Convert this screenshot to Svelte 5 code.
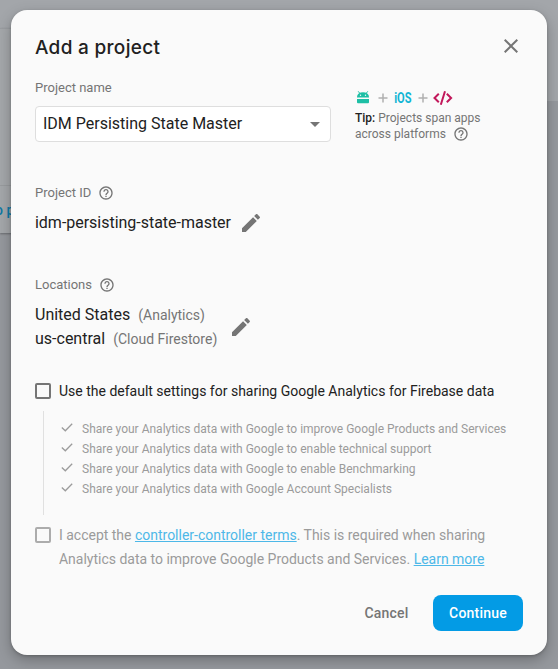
<script>
  const benefits = [
    'Share your Analytics data with Google to improve Google Products and Services',
    'Share your Analytics data with Google to enable technical support',
    'Share your Analytics data with Google to enable Benchmarking',
    'Share your Analytics data with Google Account Specialists'
  ];
</script>

{#snippet help()}
  <svg class="help" width="16" height="16" viewBox="0 0 24 24" fill="#757575">
    <path d="M11 18h2v-2h-2v2zm1-16C6.48 2 2 6.48 2 12s4.480 10 10 10 10-4.480 10-10S17.520 2 12 2zm0 18c-4.410 0-8-3.590-8-8s3.590-8 8-8 8 3.590 8 8-3.590 8-8 8zm0-14c-2.210 0-4 1.790-4 4h2c0-1.100.9-2 2-2s2 .9 2 2c0 2-3 1.750-3 5h2c0-2.250 3-2.500 3-5 0-2.210-1.790-4-4-4z" />
  </svg>
{/snippet}

{#snippet pencil()}
  <svg width="24" height="24" viewBox="0 0 24 24" fill="#757575">
    <path d="M3 17.250V21h3.750L17.810 9.940l-3.750-3.750L3 17.250zM20.710 7.040c.39-.39.39-1.020 0-1.410l-2.340-2.340c-.39-.39-1.020-.39-1.410 0l-1.830 1.830 3.750 3.750 1.830-1.830z" />
  </svg>
{/snippet}

<div class="page">
  <div class="behind">
    <div class="back-top"></div>
    <div class="back-card"><span>o p</span></div>
  </div>

  <div class="dialog">
    <header>
      <h1>Add a project</h1>
      <svg width="24" height="24" viewBox="0 0 24 24" fill="#757575">
        <path d="M19 6.410L17.590 5 12 10.590 6.410 5 5 6.410 10.590 12 5 17.590 6.410 19 12 13.410 17.590 19 19 17.590 13.410 12z" />
      </svg>
    </header>

    <section class="name-row">
      <div class="field">
        <div class="label">Project name</div>
        <div class="select">
          <span>IDM Persisting State Master</span>
          <i class="caret"></i>
        </div>
      </div>
      <aside>
        <div class="platforms">
          <svg width="100" height="16" viewBox="0 0 100 16">
            <g fill="#1dbfa5">
              <path d="M2 7.500V7a6 4.800 0 0 1 12 0v.5z" />
              <path d="M2 9h12v3.200a1 1 0 0 1-1 1H3a1 1 0 0 1-1-1z" />
              <path d="M3.200 1.300l2 2.500M12.800 1.300l-2 2.500" stroke="#1dbfa5" stroke-width="1" />
            </g>
            <circle cx="5.500" cy="5.300" r=".7" fill="#fafafa" />
            <circle cx="10.500" cy="5.300" r=".7" fill="#fafafa" />
            <path d="M28 3.500v9M23.500 8h9M68 3.500v9M63.500 8h9" stroke="#b0b0b0" stroke-width="1.500" />
            <text x="39.200" y="13" textLength="17.300" lengthAdjust="spacingAndGlyphs">iOS</text>
            <path d="M83.800 3.800L79.500 8l4.300 4.200M91.800 3.800L96.100 8l-4.300 4.200M90 1.200l-4.200 13.600" fill="none" stroke="#c2185b" stroke-width="2" />
          </svg>
        </div>
        <p class="tip"><b>Tip:</b> Projects span apps<br />across platforms {@render help()}</p>
      </aside>
    </section>

    <section class="id-block">
      <div class="label">Project ID {@render help()}</div>
      <div class="id-row"><span>idm-persisting-state-master</span>{@render pencil()}</div>
    </section>

    <section class="loc-block">
      <div class="label">Locations {@render help()}</div>
      <div class="loc-row">
        <div class="places">
          <div>United States<small>(Analytics)</small></div>
          <div>us-central<small>(Cloud Firestore)</small></div>
        </div>
        {@render pencil()}
      </div>
    </section>

    <div class="check-row">
      <i class="box"></i>
      <span>Use the default settings for sharing Google Analytics for Firebase data</span>
    </div>

    <ul>
      {#each benefits as benefit}
        <li>
          <svg width="12" height="12" viewBox="0 0 12 12"><path d="M.8 5.500l3.500 3.300L11.200 1.800" fill="none" stroke="#9b9b9b" stroke-width="1.300" /></svg>
          <span>{benefit}</span>
        </li>
      {/each}
    </ul>

    <div class="check-row terms">
      <i class="box"></i>
      <span>I accept the <a href="#terms">controller-controller terms</a>. This is required when sharing<br />Analytics data to improve Google Products and Services. <a href="#more">Learn more</a></span>
    </div>

    <footer>
      <button class="cancel">Cancel</button>
      <button class="continue">Continue</button>
    </footer>
  </div>
</div>

<style>
  .page {
    position: relative;
    box-sizing: border-box;
    width: 558px;
    height: 669px;
    padding: 10px 11px 14px;
    overflow: hidden;
    background: #95989d;
    font-family: Roboto, 'Liberation Sans', sans-serif;
    color: #212121;
  }
  .behind { position: absolute; inset: 0; }
  .back-top { height: 101px; background: #a3a6aa; }
  .back-card {
    position: absolute;
    left: 0;
    top: 28px;
    width: 40px;
    height: 205px;
    box-sizing: border-box;
    padding-top: 156px;
    background: linear-gradient(#989b9e, #989b9e) 0 156px / 100% 1px no-repeat, #a4a7aa;
    border-top: 1px solid #999ca0;
    box-shadow: 0 1px 2px rgba(0, 0, 0, .3);
  }
  .back-card span {
    display: block;
    margin: 16px 0 0 -5px;
    font-size: 14px;
    font-weight: 500;
    line-height: 18px;
    color: #0e79a5;
    white-space: nowrap;
  }
  .dialog {
    position: relative;
    box-sizing: border-box;
    height: 645px;
    padding: 24px;
    border-radius: 16px;
    background: #fafafa;
    box-shadow: 0 5px 14px rgba(0, 0, 0, .26), 0 1px 3px rgba(0, 0, 0, .2);
    white-space: nowrap;
  }
  header { display: flex; justify-content: space-between; height: 24px; }
  h1 {
    margin: 0;
    font: 500 19px/28px Inter, sans-serif;
    letter-spacing: .3px;
  }
  .label {
    display: flex;
    align-items: flex-start;
    gap: 7px;
    height: 20px;
    font-size: 13px;
    line-height: 19px;
    color: #757575;
  }
  .label .help { margin-top: 2px; }
  .name-row { display: flex; gap: 24px; height: 64px; margin-top: 20px; }
  .field { width: 296px; }
  .select {
    box-sizing: border-box;
    display: flex;
    align-items: center;
    justify-content: space-between;
    height: 36px;
    margin-top: 8px;
    padding: 0 10px 0 7px;
    border: 1px solid #dedede;
    border-radius: 4px;
    background: #fff;
    font-size: 16px;
  }
  .select span { padding-bottom: 2px; }
  .caret { border: 5px solid transparent; border-top-color: #757575; border-bottom: 0; }
  aside { padding-top: 12px; }
  .platforms { height: 16px; }
  .platforms svg { display: block; }
  text { font: 700 14px Roboto, sans-serif; fill: #12b5d4; }
  .tip { height: 32px; margin: 4px 0 0; font-size: 12px; line-height: 16px; color: #757575; }
  .tip b { font-weight: 500; color: #212121; }
  .tip .help { margin-left: 4px; vertical-align: -4px; }
  .id-block { margin-top: 41px; }
  .id-row { display: flex; align-items: center; gap: 8px; height: 24px; margin-top: 8px; font-size: 16px; }
  .id-row span { padding-bottom: 2px; letter-spacing: -.02px; }
  .loc-block { margin-top: 40px; }
  .loc-row { display: flex; align-items: center; gap: 12px; margin-top: 8px; }
  .places { font-size: 16px; line-height: 24px; }
  .places div { height: 24px; }
  small { margin-left: 8px; font-size: 14px; color: #757575; }
  .check-row { display: flex; gap: 8px; margin-top: 28px; font-size: 14px; line-height: 24px; }
  .box { box-sizing: border-box; flex: none; width: 16px; height: 16px; margin-top: 4px; border: 2px solid #757575; border-radius: 2px; }
  ul {
    height: 104px;
    margin: 8px 0 0 8px;
    padding: 8px 0 0 17px;
    box-sizing: border-box;
    border-left: 1px solid #e0e0e0;
    list-style: none;
    font-size: 12px;
    line-height: 20px;
    color: #9b9b9b;
  }
  li { display: flex; gap: 9px; }
  li svg { margin-top: 3px; }
  .terms { margin-top: 8px; color: #9b9b9b; letter-spacing: -.01px; }
  .terms .box { border-color: #acacac; }
  a { color: #4db8e8; text-decoration: underline; }
  footer { display: flex; justify-content: flex-end; gap: 8px; margin-top: 24px; }
  button { height: 36px; padding: 0; border: 0; border-radius: 8px; background: none; font: 500 14px/36px Roboto, sans-serif; letter-spacing: .2px; color: #757575; }
  .cancel { width: 77px; }
  .continue { width: 90px; background: #039be5; color: #fff; }
</style>
